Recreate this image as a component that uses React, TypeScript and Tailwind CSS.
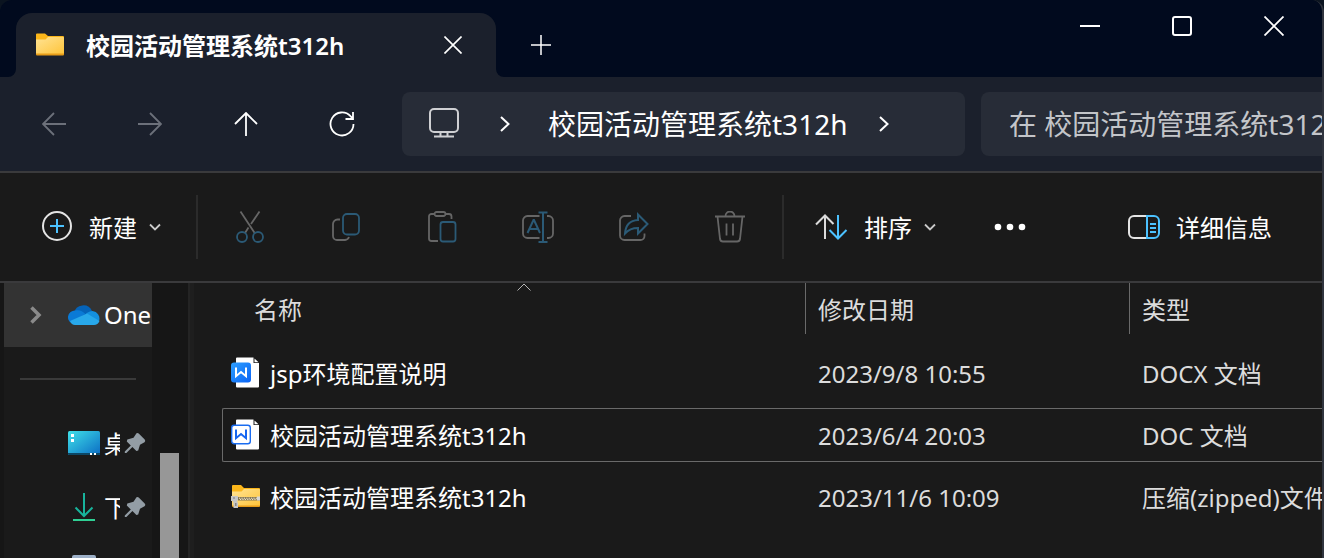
import React from 'react';

interface FileItem {
  name: string;
  date: string;
  type: string;
  icon: React.ReactNode;
  selected?: boolean;
}

/* Icons */
const FolderIcon = () => (
  <svg width="28" height="24" viewBox="0 0 28 24" className="shrink-0">
    <defs>
      <linearGradient id="folder" x1="0" y1="0" x2="1" y2="1">
        <stop offset="0" stopColor="#ffe394" />
        <stop offset="1" stopColor="#fec43a" />
      </linearGradient>
    </defs>
    <path d="M0 1.500a1 1 0 0 1 1-1h8L12 3h15a1 1 0 0 1 1 1v6H0z" fill="#fbb61a" />
    <path d="M0 6.500h9.500L12 4h15a1 1 0 0 1 1 1v16H0z" fill="url(#folder)" />
    <path d="M0 20.500h28v1a1 1 0 0 1-1 1H1a1 1 0 0 1-1-1z" fill="#e79c18" />
  </svg>
);

const ZipIcon = () => (
  <svg width="30" height="26" viewBox="0 0 30 26" className="shrink-0">
    <path d="M1 2a1 1 0 0 1 1-1h8l3 3h15a1 1 0 0 1 1 1v6H1z" fill="#fbb61a" />
    <path d="M1 7.500h9.500L13 5h15a1 1 0 0 1 1 1v16H1z" fill="url(#folder)" />
    <path d="M1 21.500h28v.5a1 1 0 0 1-1 1H2a1 1 0 0 1-1-1z" fill="#e79c18" />
    <path d="M7 13h22v3.500H7z" fill="#857650" />
    <path d="M8 14.200h18M9 15.400h17" stroke="#f6efdc" strokeDasharray="1.200 1.200" />
    <path d="M26 12.500h3v4h-3z" fill="#d6d6d6" />
    <path d="M0 12h7v4.500H6l1 3V24H2.500v-5L2 17H0z" fill="#c6c6c6" />
    <path d="M2 14h2M4.800 19v3" stroke="#777" strokeWidth="1.200" />
  </svg>
);

const DocIcon = ({ filled }: { filled?: boolean }) => (
  <svg width="30" height="32" viewBox="0 0 30 32" className="shrink-0">
    <defs>
      <linearGradient id="docx" x1="0" y1="0" x2="1" y2="1">
        <stop offset="0" stopColor="#2ea0ff" />
        <stop offset="1" stopColor="#0a63f5" />
      </linearGradient>
    </defs>
    <path d="M6 .500h16.500v5.500H28v23.500a1 1 0 0 1-1 1H6a1 1 0 0 1-1-1V1.500a1 1 0 0 1 1-1z" fill="#fff" />
    <path d="M23.500 1.500L27.500 5.200h-4z" fill="#fff" />
    {filled ? (
      <rect x="0" y="5.500" width="20" height="20" rx="3" fill="url(#docx)" />
    ) : (
      <rect x=".700" y="6.200" width="18.600" height="18.600" rx="2.500" fill="#fff" stroke="#1a6cf0" strokeWidth="1.400" />
    )}
    <path
      d="M5 10.500v8.700l5-4.200 5 4.200v-8.700"
      fill="none"
      stroke={filled ? '#fff' : '#1565f0'}
      strokeWidth="2"
    />
  </svg>
);

const Cross = ({ size }: { size: number }) => (
  <svg width={size} height={size} viewBox="0 0 20 20" fill="none" stroke="currentColor" strokeWidth="1.800">
    <path d="M.5.5l19 19M19.500.5l-19 19" />
  </svg>
);

const ChevronRight = () => (
  <svg width="10" height="16" viewBox="0 0 10 16" fill="none" stroke="currentColor" strokeWidth="2">
    <path d="M1 1l7.500 7L1 15" />
  </svg>
);

const ChevronDown = () => (
  <svg width="12" height="8" viewBox="0 0 12 8" fill="none" stroke="#c9c9c9" strokeWidth="1.800" className="shrink-0">
    <path d="M1 1.500l5 5 5-5" />
  </svg>
);

const PinIcon = () => (
  <svg width="22" height="22" viewBox="0 0 22 22" className="shrink-0" fill="#939da5">
    <path d="M12.500 1.200a2 2 0 0 1 2.200.3l6 6a2 2 0 0 1-.2 2.800l-4.500 2.500-1.800 5.800-1.800.4-4-4-6 6H.8v-1.600l6-6-4-4 .5-1.800 6.200-1.800z" />
  </svg>
);

const ICON = {
  width: 32,
  height: 32,
  viewBox: '0 0 32 32',
  fill: 'none',
  stroke: '#666',
  strokeWidth: 1.8,
};
const BLUE = '#2b5a76';

const tools = [
  {
    label: '剪切',
    icon: (
      <svg {...ICON}>
        <path d="M6.500.5l14.500 22M25.500.5l-8.500 12.500M14.500 16.500L11 22" />
        <circle cx="8" cy="26" r="5" stroke={BLUE} />
        <circle cx="24" cy="26" r="5" stroke={BLUE} />
      </svg>
    ),
  },
  {
    label: '复制',
    icon: (
      <svg {...ICON}>
        <path d="M10 8.500H7.500A4.500 4.500 0 0 0 3 13v12a4 4 0 0 0 4 4h8a4.500 4.500 0 0 0 4-3" />
        <rect x="13" y="3" width="16" height="20.500" rx="4" stroke={BLUE} />
      </svg>
    ),
  },
  {
    label: '粘贴',
    icon: (
      <svg {...ICON}>
        <path d="M8.500 3H5.500A2.500 2.500 0 0 0 3 5.500v22A2.500 2.500 0 0 0 5.500 30H12M19 3h4a2.500 2.500 0 0 1 2.500 2.500V8" />
        <rect x="8.500" y="1" width="11" height="4" rx="2" />
        <rect x="14.500" y="11" width="15" height="19.500" rx="2.500" stroke={BLUE} />
      </svg>
    ),
  },
  {
    label: '重命名',
    icon: (
      <svg {...ICON}>
        <path d="M17.500 5H5.500a4.500 4.500 0 0 0-4.500 4.500v13A4.500 4.500 0 0 0 5.500 27h12M25 5h1.500A4.500 4.500 0 0 1 31 9.500v13a4.500 4.500 0 0 1-4.500 4.500H25" />
        <path d="M5.500 22l6-13h.5l6 13M7.500 18h9" stroke={BLUE} strokeWidth="2" />
        <path d="M16.500 1.500h9M16.500 31h9M21 1.500V31" stroke={BLUE} strokeWidth="2" />
      </svg>
    ),
  },
  {
    label: '共享',
    icon: (
      <svg {...ICON}>
        <path d="M13 5H6.500A4.500 4.500 0 0 0 2 9.500v15A4.500 4.500 0 0 0 6.500 29h16a4 4 0 0 0 4-4v-2.500" />
        <path d="M20 3.500l9.500 9.500-9.500 9.500V17c-6 0-9.500 1.500-13 5.500C7.500 14.500 12 9.500 20 9z" stroke={BLUE} strokeWidth="2" />
      </svg>
    ),
  },
  {
    label: '删除',
    icon: (
      <svg {...ICON}>
        <path d="M1 5.500h30M3.500 5.500l2.500 22.500a3 3 0 0 0 3 2.500h14a3 3 0 0 0 3-2.500L28.500 5.500M11.500 5a4.500 4.500 0 0 1 9 0M12.500 12.500v12M19 12.500v12" />
      </svg>
    ),
  },
];

const files: FileItem[] = [
  { name: 'jsp环境配置说明', date: '2023/9/8 10:55', type: 'DOCX 文档', icon: <DocIcon filled /> },
  { name: '校园活动管理系统t312h', date: '2023/6/4 20:03', type: 'DOC 文档', icon: <DocIcon />, selected: true },
  { name: '校园活动管理系统t312h', date: '2023/11/6 10:09', type: '压缩(zipped)文件', icon: <ZipIcon /> },
];

const TitleBar = () => (
  <header className="flex h-[77px] shrink-0 items-end bg-[#010a1e]">
    <div className="flex w-4 shrink-0 justify-end">
      <svg width="8" height="8" viewBox="0 0 8 8" fill="#1b202c">
        <path d="M8 0v8H0a8 8 0 0 0 8-8z" />
      </svg>
    </div>
    <div className="flex h-16 w-[480px] items-center rounded-t-2xl bg-[#1b202c] pr-[30px] pl-5">
      <FolderIcon />
      <span className="ml-[22px] flex-1 truncate pt-[2px] text-2xl font-semibold">校园活动管理系统t312h</span>
      <button aria-label="关闭标签页" className="p-1">
        <Cross size={18} />
      </button>
    </div>
    <svg width="8" height="8" viewBox="0 0 8 8" fill="#1b202c" className="shrink-0">
      <path d="M0 0v8h8a8 8 0 0 1-8-8z" />
    </svg>
    <button aria-label="新建标签页" className="flex h-16 w-[74px] items-center justify-center">
      <svg width="20" height="20" viewBox="0 0 20 20" stroke="currentColor" strokeWidth="1.500">
        <path d="M10 0v20M0 10h20" />
      </svg>
    </button>
    <div className="mr-[2px] ml-auto flex self-start">
      <button aria-label="最小化" className="flex h-[52px] w-[92px] items-center justify-center">
        <svg width="20" height="20" viewBox="0 0 20 20" stroke="currentColor" strokeWidth="2">
          <path d="M0 10h20" />
        </svg>
      </button>
      <button aria-label="最大化" className="flex h-[52px] w-[92px] items-center justify-center">
        <svg width="20" height="20" viewBox="0 0 20 20" fill="none" stroke="currentColor" strokeWidth="2">
          <rect x="1" y="1" width="18" height="18" rx="2" />
        </svg>
      </button>
      <button aria-label="关闭" className="flex h-[52px] w-[92px] items-center justify-center">
        <Cross size={20} />
      </button>
    </div>
  </header>
);

const NavBar = () => (
  <nav className="flex h-[94px] shrink-0 items-center bg-[#1b202c] pl-[6px]">
    <button aria-label="后退" disabled className="flex h-16 w-24 items-center justify-center text-[#6c707a]">
      <svg width="24" height="24" viewBox="0 0 24 24" fill="none" stroke="currentColor" strokeWidth="1.800">
        <path d="M24 12H1M12 1L1 12l11 11" />
      </svg>
    </button>
    <button aria-label="前进" disabled className="flex h-16 w-24 items-center justify-center text-[#6c707a]">
      <svg width="24" height="24" viewBox="0 0 24 24" fill="none" stroke="currentColor" strokeWidth="1.800">
        <path d="M0 12h23M12 1l11 11-11 11" />
      </svg>
    </button>
    <button aria-label="向上" className="flex h-16 w-24 items-center justify-center">
      <svg width="24" height="24" viewBox="0 0 24 24" fill="none" stroke="currentColor" strokeWidth="1.800">
        <path d="M12 24V1M1 12L12 1l11 11" />
      </svg>
    </button>
    <button aria-label="刷新" className="flex h-16 w-24 items-center justify-center">
      <svg width="26" height="26" viewBox="0 0 26 26" fill="none" stroke="currentColor" strokeWidth="1.800">
        <path d="M24.500 13A11.500 11.500 0 1 1 21.500 5.200l2.500 2.600M24 1v7h-7.500" />
      </svg>
    </button>
    <div className="ml-3 flex h-16 min-w-0 flex-1 items-center rounded-lg bg-[#272c37] pl-[26px] text-[28px]">
      <svg width="32" height="32" viewBox="0 0 32 32" fill="none" stroke="#cfd0d3" strokeWidth="2" className="shrink-0">
        <rect x="2" y="1" width="28" height="23" rx="4" />
        <path d="M12.500 24v4M19.500 24v4M6 28.500h20" />
      </svg>
      <button aria-label="展开" className="pr-[38px] pl-10">
        <ChevronRight />
      </button>
      <a href="#folder" className="truncate">校园活动管理系统t312h</a>
      <button aria-label="展开子文件夹" className="px-8">
        <ChevronRight />
      </button>
    </div>
    <input
      type="text"
      aria-label="搜索"
      placeholder="在 校园活动管理系统t312"
      className="ml-4 h-16 w-[341px] shrink-0 rounded-l-lg bg-[#272c37] pl-7 text-[28px] placeholder:text-[#c3c5c9] outline-none"
    />
  </nav>
);

const ToolBar = () => (
  <div className="flex h-[112px] shrink-0 items-center border-y-2 border-[#3a3a3c] bg-[#1a1a1a] pr-[50px] text-2xl">
    <button className="flex w-[196px] shrink-0 items-center pl-[41px]">
      <svg width="32" height="32" viewBox="0 0 32 32" fill="none" stroke="#e4e4e4" strokeWidth="2" className="shrink-0">
        <circle cx="16" cy="15" r="14" />
        <path d="M9 15h14M16 8v14" stroke="#4cc2ff" />
      </svg>
      <span className="mr-3 ml-4 pt-[2px]">新建</span>
      <ChevronDown />
    </button>
    <div className="mr-1 h-16 w-[2px] shrink-0 bg-[#2b2b2b]" />
    {tools.map((tool) => (
      <button key={tool.label} aria-label={tool.label} disabled className="flex h-16 w-24 shrink-0 items-center justify-center">
        {tool.icon}
      </button>
    ))}
    <div className="ml-1 h-16 w-[2px] shrink-0 bg-[#2b2b2b]" />
    <button className="ml-[30px] flex shrink-0 items-center">
      <svg width="34" height="28" viewBox="0 0 34 28" fill="none" stroke="#dcdcdc" strokeWidth="2" className="shrink-0">
        <path d="M11 26V2.500M2 11.500l9-9 8.500 8.500" />
        <path d="M24 2v23.500M15.500 17l8.500 8.500L32.500 17" stroke="#4cc2ff" />
      </svg>
      <span className="mr-3 ml-4 pt-[2px]">排序</span>
      <ChevronDown />
    </button>
    <button aria-label="查看更多" className="ml-12 p-2">
      <svg width="34" height="8" viewBox="0 0 34 8" fill="currentColor">
        <circle cx="6" cy="4" r="3.300" />
        <circle cx="18" cy="4" r="3.300" />
        <circle cx="30" cy="4" r="3.300" />
      </svg>
    </button>
    <button className="ml-auto flex shrink-0 items-center gap-4">
      <svg width="32" height="28" viewBox="0 0 32 28" fill="none" stroke="#e4e4e4" strokeWidth="2">
        <path d="M19 3H6a5 5 0 0 0-5 5v12a5 5 0 0 0 5 5h13" />
        <path d="M19 3h7a5 5 0 0 1 5 5v12a5 5 0 0 1-5 5h-7zM22 11h6M22 15h6M22 19h6" stroke="#4cc2ff" />
      </svg>
      <span className="pt-[2px]">详细信息</span>
    </button>
  </div>
);

const SideBar = () => (
  <aside className="flex w-[190px] shrink-0 overflow-hidden border-r-2 border-[#242424] bg-[#161616] pl-1">
    <div className="w-[148px] shrink-0 overflow-hidden bg-[#1a1a1a] text-2xl">
      <a href="#onedrive" className="flex h-16 items-center overflow-hidden bg-[#333] whitespace-nowrap">
        <svg width="12" height="18" viewBox="0 0 12 18" fill="none" stroke="#8a8a8a" strokeWidth="3.500" className="mr-6 ml-[26px] shrink-0">
          <path d="M1.500 1.500L9 9l-7.500 7.500" />
        </svg>
        <svg width="34" height="22" viewBox="0 0 34 22" className="mr-1 shrink-0">
          <path d="M8 9a9.500 9.500 0 0 1 18-2l-4 8H10z" fill="#0563b8" />
          <path d="M9.500 6.500c4-.8 7 .5 10 3.500L4.500 18.500A7 7 0 0 1 2 12.500a7 7 0 0 1 7.500-6z" fill="#0a7ad6" />
          <path d="M19 11c2.500-3 5-4 7.500-4a7.500 7.500 0 0 1 6.500 10l-10-2z" fill="#1490df" />
          <path d="M4 17l17-7.500 12.500 7.500c-1 2.800-3 4-5.500 4H9c-2.500 0-4-1.500-5-4z" fill="#28a8ea" />
        </svg>
        One
      </a>
      <div className="flex h-16 items-center px-4">
        <hr className="w-full border-t-2 border-[#3a3a3a]" />
      </div>
      <a href="#desktop" className="flex h-16 items-center pl-16">
        <svg width="32" height="24" viewBox="0 0 32 24" className="shrink-0">
          <defs>
            <linearGradient id="desktop" x1="0" y1="0" x2="1" y2="1">
              <stop offset="0" stopColor="#3fe0e8" />
              <stop offset="1" stopColor="#0b6cc4" />
            </linearGradient>
          </defs>
          <rect width="32" height="24" rx="1.500" fill="url(#desktop)" />
          <path d="M0 22h32v.5a1.500 1.500 0 0 1-1.500 1.500h-29A1.500 1.500 0 0 1 0 22.500z" fill="#0c4664" />
          <path d="M3 3h3v3H3zM3 8h3v3H3zM22 22h2v2h-2zM26 22h2v2h-2z" fill="#fff" />
        </svg>
        <span className="mr-1 ml-1 w-4 shrink-0 overflow-hidden pt-[2px]">桌</span>
        <PinIcon />
      </a>
      <a href="#downloads" className="flex h-16 items-center pl-16">
        <svg width="32" height="28" viewBox="0 0 32 28" fill="none" strokeWidth="2" className="shrink-0">
          <path d="M16 0v22M7.500 14.500L16 23l8.500-8.500" stroke="#18b49c" />
          <path d="M5 27h22" stroke="#2fcf94" />
        </svg>
        <span className="mr-1 ml-1 w-4 shrink-0 overflow-hidden pt-[2px]">下</span>
        <PinIcon />
      </a>
      <a href="#documents" aria-label="文档" className="flex h-16 items-center pl-[68px]">
        <svg width="24" height="32" viewBox="0 0 24 32">
          <rect width="24" height="32" rx="2" fill="#9db0c8" />
        </svg>
      </a>
    </div>
    {/* Scrollbar */}
    <div className="w-9 shrink-0 px-2 pt-[170px]">
      <div className="h-full w-[19px] bg-[#979797]" />
    </div>
  </aside>
);

const FileTable = () => (
  <main className="min-w-0 flex-1 overflow-hidden border-l-4 border-[#1e1e1e] bg-[#1a1a1a] pl-7">
    <table className="w-full table-fixed border-separate border-spacing-0 text-left text-2xl whitespace-nowrap">
      <thead className="text-[#dcdcdc]">
        <tr className="h-[59px] align-top">
          <th className="w-[584px] p-0 font-normal">
            <div className="relative ml-5 flex h-[51px] items-center border-r border-[#6a6a6a] pt-[2px] pl-3">
              名称
              <svg
                width="14"
                height="8"
                viewBox="0 0 14 8"
                fill="none"
                stroke="#b5b5b5"
                className="absolute top-0 left-1/2 -translate-x-1/2"
              >
                <path d="M.5 7.500L7 1l6.500 6.500" />
              </svg>
            </div>
          </th>
          <th className="w-[324px] p-0 font-normal">
            <div className="flex h-[51px] items-center border-r border-[#6a6a6a] pt-[2px] pl-3">修改日期</div>
          </th>
          <th className="p-0 font-normal">
            <div className="flex h-[51px] items-center pt-[2px] pl-3">类型</div>
          </th>
        </tr>
      </thead>
      <tbody>
        {files.map((file) => {
          const border = file.selected ? 'border-[#6a6a6a]' : 'border-transparent';
          return (
            <tr key={file.type} className="text-[#dcdcdc]">
              <td className="px-0 py-1">
                <div className={`flex h-[54px] items-center gap-[9px] rounded-l-xs border-y border-l pl-2 text-white ${border}`}>
                  {file.icon}
                  <span className="pt-[2px]">{file.name}</span>
                </div>
              </td>
              <td className="px-0 py-1">
                <div className={`flex h-[54px] items-center border-y pt-[2px] pl-3 ${border}`}>{file.date}</div>
              </td>
              <td className="px-0 py-1">
                <div className={`flex h-[54px] items-center overflow-hidden border-y pt-[2px] pl-3 ${border}`}>{file.type}</div>
              </td>
            </tr>
          );
        })}
      </tbody>
    </table>
  </main>
);

export default function App() {
  return (
    <div className="h-screen overflow-hidden bg-[#0b1420] font-['Noto_Sans','Noto_Sans_CJK_SC',sans-serif] text-white">
      <div className="flex h-full flex-col overflow-hidden rounded-t-xl border-r-2 border-[#30343e]">
        <TitleBar />
        <NavBar />
        <ToolBar />
        <div className="flex min-h-0 flex-1">
          <SideBar />
          <FileTable />
        </div>
      </div>
    </div>
  );
}
